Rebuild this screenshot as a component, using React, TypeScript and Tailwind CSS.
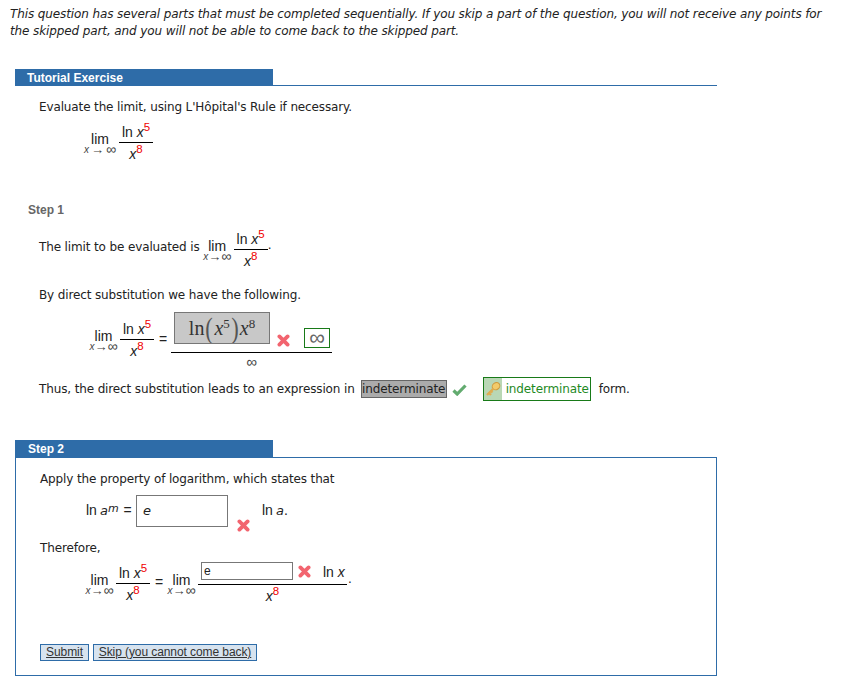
import React from "react";

const BLUE = "bg-[#2e6ca8]";
const SANS = "font-['Liberation_Sans',sans-serif]";

function Sup({ n, den = false }: { n: string; den?: boolean }) {
  return <sup className={"text-[11.5px] not-italic leading-none text-[#f00000] " + (den ? "-top-[6px]" : "-top-[6px]")}>{n}</sup>;
}

function Lim({ tight = false }: { tight?: boolean }) {
  return (
    <span className={"mt-[9px] flex flex-col items-center text-[#222] " + SANS + " " + (tight ? "w-[27px]" : "w-[30px]")}>
      <span className="text-[14px] leading-[13px]">lim</span>
      <span className={"flex h-[7px] items-center whitespace-nowrap text-[10px] leading-[7px] text-[#444] " + (tight ? "gap-0" : "gap-[2px]")}>
        <i>x</i>
        <span className="text-[13px] leading-[7px]">→</span>
        <span className="text-[14px] leading-[7px]">∞</span>
      </span>
    </span>
  );
}

function LnFrac() {
  return (
    <span className={"flex w-[34px] flex-col items-center text-[14px] text-[#222] " + SANS}>
      <span className="h-[19px] w-full whitespace-nowrap border-b border-black text-center leading-[17px]">ln <i>x</i><Sup n="5" /></span>
      <span className="h-[18px] leading-[23px]"><i>x</i><Sup n="8" den /></span>
    </span>
  );
}

function LimFrac({ tight = false, className = "" }: { tight?: boolean; className?: string }) {
  return (
    <span className={"flex items-start " + (tight ? "gap-[3px] " : "gap-[4px] ") + className}>
      <Lim tight={tight} />
      <LnFrac />
    </span>
  );
}

function Cross({ className = "" }: { className?: string }) {
  return (
    <svg width="13" height="13" viewBox="0 0 13 13" className={"shrink-0 " + className}>
      <path d="M2.4 2.4 L10.6 10.6 M10.6 2.4 L2.4 10.6" stroke="#f2646f" strokeWidth="3.8" strokeLinecap="round" />
    </svg>
  );
}

function Check() {
  return (
    <svg width="15" height="13" viewBox="0 0 15 13" className="shrink-0">
      <path d="M1.5 7.5 L5.2 11 L13.5 2.5" fill="none" stroke="#62ab6f" strokeWidth="3.2" />
    </svg>
  );
}

function Key() {
  return (
    <svg width="16" height="16" viewBox="0 0 16 16">
      <ellipse cx="11" cy="5.2" rx="4" ry="3.4" fill="#f3cb6a" stroke="#cf9a3c" strokeWidth="1" transform="rotate(-35 11 5.2)" />
      <path d="M8.5 7.5 L2 14 M4 12 L6 14 M6 10 L7.5 11.5" fill="none" stroke="#e0ad50" strokeWidth="2.4" />
    </svg>
  );
}

function Underlined({ children, w }: { children: React.ReactNode; w: string }) {
  return (
    <button className={"h-[17px] border border-[#2e6ca8] bg-[#d7e3ef] text-center text-[12px] leading-[15px] tracking-[-0.08px] text-[#333] underline " + SANS + " " + w}>
      {children}
    </button>
  );
}

function Paren({ c }: { c: string }) {
  return <span className="inline-block scale-x-[0.75] text-[30px] font-light leading-none text-[#555]">{c}</span>;
}

export default function App() {
  return (
    <div className="h-[692px] w-[854px] overflow-hidden bg-white font-['DejaVu_Sans',sans-serif] text-[12px] text-[#222]">
      <p className="ml-[10px] w-[820px] pt-[6px] text-[12px] italic leading-[17px] tracking-[-0.11px]">
        This question has several parts that must be completed sequentially. If you skip a part of the question, you will not receive any points for the skipped part, and you will not be able to come back to the skipped part.
      </p>

      <section className="ml-[15px] mt-[29px] w-[702px]">
        <div className="border-b border-[#2e6ca8]">
          <div className={"h-[16px] w-[258px] pl-[12px] text-[12px] font-bold leading-[18px] text-white " + SANS + " " + BLUE}>Tutorial Exercise</div>
        </div>

        <p className="ml-[24px] mt-[13px] leading-[17px] tracking-[-0.13px]">Evaluate the limit, using L'Hôpital's Rule if necessary.</p>

        <div className="ml-[70px] mt-[8px] flex">
          <LimFrac />
        </div>

        <p className={"ml-[13px] mt-[41px] text-[12px] font-bold leading-[17px] text-[#666] " + SANS}>Step 1</p>

        <div className="ml-[24px] mt-[12px] flex items-start">
          <span className="mt-[8px] leading-[17px] tracking-[-0.13px]">The limit to be evaluated is</span>
          <LimFrac tight className="ml-[4px]" />
          <span className="mt-[6px] leading-[17px]">.</span>
        </div>

        <p className="ml-[24px] mt-[19px] leading-[17px] tracking-[-0.13px]">By direct substitution we have the following.</p>

        <div className="ml-[75px] mt-[8px] flex items-start">
          <LimFrac tight className="mt-[9px]" />
          <span className={"ml-[5px] mt-[19px] w-[7px] text-[14px] leading-[16px] " + SANS}>=</span>
          <span className="ml-[5px] flex w-[161px] flex-col">
            <span className="flex h-[41px] items-start border-b border-black pl-[3px]">
              <span className="flex h-[32px] w-[96px] shrink-0 items-center justify-center overflow-hidden border border-[#777] bg-[#c8c8c8] font-['Liberation_Serif',serif] text-[20px] leading-none text-[#333]">
                ln<Paren c="(" /><i>x</i><sup className="-top-[5px] text-[13px] leading-none">5</sup><Paren c=")" /><i>x</i><sup className="-top-[5px] text-[13px] leading-none">8</sup>
              </span>
              <Cross className="ml-[7px] mt-[22px]" />
              <span className={"ml-[14px] mt-[16px] flex h-[20px] w-[26px] shrink-0 items-center justify-center border border-[#187a18] text-[22px] leading-none text-[#666] " + SANS}>∞</span>
            </span>
            <span className={"h-[16px] text-center text-[15px] leading-[17px] text-[#444] " + SANS}>∞</span>
          </span>
        </div>

        <div className="ml-[24px] mt-[8px] flex items-center">
          <span className="tracking-[-0.13px]">Thus, the direct substitution leads to an expression in</span>
          <span className="ml-[6px] flex h-[18px] w-[86px] items-center justify-center border border-[#666] bg-[#ababab] tracking-[-0.13px]">indeterminate</span>
          <span className="ml-[5px] flex"><Check /></span>
          <span className="ml-[16px] flex h-[24px] w-[108px] items-center border border-[#187a18]">
            <span className="flex h-full w-[18px] items-center justify-center bg-[#b9d7b5]"><Key /></span>
            <span className="ml-[4px] tracking-[-0.13px] text-[#1f8a1f]">indeterminate</span>
          </span>
          <span className="ml-[8px] tracking-[-0.13px]">form.</span>
        </div>
      </section>

      <section className="ml-[15px] mt-[39px] w-[702px]">
        <div className={"h-[17px] w-[258px] pl-[13px] text-[12px] font-bold leading-[18px] text-white " + SANS + " " + BLUE}>Step 2</div>
        <div className="h-[219px] border border-[#2e6ca8] pl-[24px] pt-[13px]">
          <p className="leading-[17px] tracking-[-0.13px]">Apply the property of logarithm, which states that</p>

          <div className="ml-[46px] mt-[7px] flex items-start">
            <span className={"mt-[7px] flex w-[50px] items-baseline whitespace-nowrap text-[14px] leading-[16px] " + SANS}>
              ln
              <i className="ml-[3px] font-['DejaVu_Sans',sans-serif] text-[13px]">a</i>
              <i className="relative -top-[3px] font-['DejaVu_Sans',sans-serif] text-[11px] leading-none">m</i>
              <span className="ml-[5px]">=</span>
            </span>
            <span className="flex h-[32px] w-[92px] items-center border border-[#777] pl-[6px] text-[13px]"><i>e</i></span>
            <Cross className="ml-[9px] mt-[24px]" />
            <span className={"ml-[12px] mt-[7px] flex items-baseline text-[14px] leading-[16px] " + SANS}>ln<i className="ml-[3px] font-['DejaVu_Sans',sans-serif] text-[13px]">a</i>.</span>
          </div>

          <p className="mt-[8px] leading-[17px] tracking-[-0.13px]">Therefore,</p>

          <div className="ml-[46px] mt-[5px] flex items-start">
            <LimFrac tight className="mt-[3px]" />
            <span className={"ml-[5px] mt-[12px] w-[8px] text-[14px] leading-[16px] " + SANS}>=</span>
            <span className="ml-[5px] mt-[3px] flex"><Lim tight /></span>
            <span className={"ml-[3px] flex w-[149px] flex-col text-[14px] " + SANS}>
              <span className="flex h-[23px] items-start border-b border-black pl-[3px]">
                <span className="flex h-[18px] w-[92px] shrink-0 items-center border border-[#777] pl-[2px] text-[12px] leading-none">e</span>
                <Cross className="ml-[5px] mt-[3px]" />
                <span className="ml-[12px] whitespace-nowrap leading-[20px]">ln <i>x</i></span>
              </span>
              <span className="h-[18px] text-center leading-[23px]"><i>x</i><Sup n="8" den /></span>
            </span>
            <span className="ml-[1px] mt-[8px] leading-[18px]">.</span>
          </div>

          <div className="mt-[41px] flex gap-[4px]">
            <Underlined w="w-[49px]">Submit</Underlined>
            <Underlined w="w-[164px]">Skip (you cannot come back)</Underlined>
          </div>
        </div>
      </section>
    </div>
  );
}
